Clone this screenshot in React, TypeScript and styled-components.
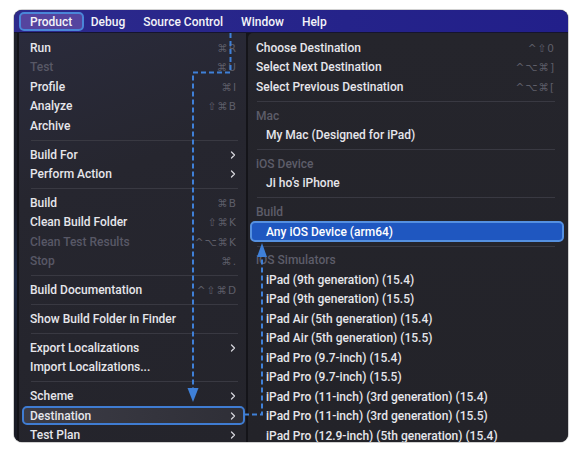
import React from "react";
import styled, { createGlobalStyle, css } from "styled-components";
import { ChevronRight } from "lucide-react";

const GlobalStyle = createGlobalStyle`
  html, body { margin: 0; padding: 0; background: #ffffff; }
  body { font-family: Roboto, "Liberation Sans", "DejaVu Sans", sans-serif; -webkit-font-smoothing: antialiased; }
`;

const Page = styled.div`
  position: relative;
  width: 586px;
  height: 460px;
  padding: 10px 0 0 14px;
  box-sizing: border-box;
  overflow: hidden;
`;

const Frame = styled.div`
  width: 554px;
  height: 432px;
  border-radius: 8px;
  overflow: hidden;
  background: #141419;
  display: flex;
  flex-direction: column;
  box-shadow: 0 0 0 1px rgba(0, 0, 0, 0.18);
`;

const MenuBar = styled.div`
  height: 23px;
  flex: none;
  box-sizing: border-box;
  display: flex;
  align-items: stretch;
  padding: 2px 0 1px 6.5px;
  background: linear-gradient(90deg, #2d2a8c 0%, #25238a 60%, #221f8a 100%);
  border-bottom: 1px solid #15142e;
  font-size: 12px;
  font-weight: 500;
  color: #f3f3f8;
`;

const MenuTitle = styled.div<{ $active?: boolean }>`
  position: relative;
  display: flex;
  align-items: center;
  padding: 0 9px;
  & > span { position: relative; z-index: 1; }
  ${(p) =>
    p.$active &&
    css`
      padding: 0 9.5px;
      &::before {
        content: "";
        position: absolute;
        top: 0;
        bottom: 0;
        left: -1.5px;
        right: -2.5px;
        border: 2px solid #4a86d8;
        border-radius: 5px;
        background: #55449f;
      }
    `}
`;

const Body = styled.div`
  flex: 1;
  min-height: 0;
  display: flex;
  gap: 2px;
`;

const BackStrip = styled.div`
  width: 3px;
  flex: none;
  background: linear-gradient(180deg, #20222c 0%, #1a1c26 40%, #1f2a44 60%, #1a1c26 80%);
`;

const Panel = styled.div<{ $side: "left" | "right" }>`
  box-sizing: border-box;
  padding-top: 5px;
  overflow: hidden;
  ${(p) =>
    p.$side === "left"
      ? css`
          width: 227px;
          flex: none;
          background: linear-gradient(160deg, #2a2b3c 0%, #26262f 35%, #24242b 100%);
        `
      : css`
          flex: 1;
          border-top-left-radius: 5px;
          background: linear-gradient(180deg, #25252c 0%, #232329 100%);
        `}
`;

const Row = styled.div<{
  $side: "left" | "right";
  $tone?: "gray" | "blue";
  $disabled?: boolean;
  $indent?: boolean;
  $header?: boolean;
}>`
  height: 19.5px;
  box-sizing: border-box;
  display: flex;
  align-items: center;
  border: 2px solid transparent;
  border-radius: 5px;
  font-size: 12px;
  font-weight: 500;
  color: #e6e6eb;
  white-space: nowrap;
  ${(p) =>
    p.$side === "left"
      ? css`
          margin: 0 1px 0 3px;
          padding: 0 6px 0 6px;
        `
      : css`
          margin: 0 4px 0 2px;
          padding: 0 7px 0 ${p.$indent ? 14 : 4}px;
        `}
  ${(p) =>
    p.$disabled &&
    css`
      color: #585866;
    `}
  ${(p) =>
    p.$header &&
    css`
      color: #5d5d69;
    `}
  ${(p) =>
    p.$tone === "gray" &&
    css`
      border-color: #3f7cd2;
      background: linear-gradient(90deg, #3c3c46 0%, #34343d 60%, #2f2f37 100%);
    `}
  ${(p) =>
    p.$tone === "blue" &&
    css`
      height: 21px;
      margin-top: -0.75px;
      margin-bottom: -0.75px;
      border-color: #5590e0;
      background: #1f57c0;
      color: #ffffff;
    `}
`;

const Label = styled.span`
  flex: 1;
`;

const Shortcut = styled.span`
  font-family: "DejaVu Sans", Roboto, sans-serif;
  font-size: 10.5px;
  letter-spacing: 1px;
  color: #5e5e69;
`;

const Chevron = styled(ChevronRight)`
  color: #d4d4da;
  margin-right: -2px;
`;

const Separator = styled.div<{ $side: "left" | "right" }>`
  height: 9.3px;
  display: flex;
  align-items: center;
  padding: ${(p) => (p.$side === "left" ? "0 8px 0 12px" : "0 13px 0 9px")};
  &::after {
    content: "";
    flex: 1;
    height: 1px;
    background: #393942;
  }
`;

const Overlay = styled.svg`
  position: absolute;
  left: 0;
  top: 0;
  pointer-events: none;
`;

type Item =
  | { sep: true }
  | {
      sep?: false;
      label: string;
      shortcut?: string;
      sub?: boolean;
      disabled?: boolean;
      tone?: "gray" | "blue";
      indent?: boolean;
      header?: boolean;
    };

const leftItems: Item[] = [
  { label: "Run", shortcut: "⌘R" },
  { label: "Test", shortcut: "⌘U", disabled: true },
  { label: "Profile", shortcut: "⌘I" },
  { label: "Analyze", shortcut: "⇧⌘B" },
  { label: "Archive" },
  { sep: true },
  { label: "Build For", sub: true },
  { label: "Perform Action", sub: true },
  { sep: true },
  { label: "Build", shortcut: "⌘B" },
  { label: "Clean Build Folder", shortcut: "⇧⌘K" },
  { label: "Clean Test Results", shortcut: "^⌥⌘K", disabled: true },
  { label: "Stop", shortcut: "⌘.", disabled: true },
  { sep: true },
  { label: "Build Documentation", shortcut: "^⇧⌘D" },
  { sep: true },
  { label: "Show Build Folder in Finder" },
  { sep: true },
  { label: "Export Localizations", sub: true },
  { label: "Import Localizations..." },
  { sep: true },
  { label: "Scheme", sub: true },
  { label: "Destination", sub: true, tone: "gray" },
  { label: "Test Plan", sub: true },
];

const rightItems: Item[] = [
  { label: "Choose Destination", shortcut: "^⇧0" },
  { label: "Select Next Destination", shortcut: "^⌥⌘]" },
  { label: "Select Previous Destination", shortcut: "^⌥⌘[" },
  { sep: true },
  { label: "Mac", header: true },
  { label: "My Mac (Designed for iPad)", indent: true },
  { sep: true },
  { label: "iOS Device", header: true },
  { label: "Ji ho’s iPhone", indent: true },
  { sep: true },
  { label: "Build", header: true },
  { label: "Any iOS Device (arm64)", indent: true, tone: "blue" },
  { sep: true },
  { label: "iOS Simulators", header: true },
  { label: "iPad (9th generation) (15.4)", indent: true },
  { label: "iPad (9th generation) (15.5)", indent: true },
  { label: "iPad Air (5th generation) (15.4)", indent: true },
  { label: "iPad Air (5th generation) (15.5)", indent: true },
  { label: "iPad Pro (9.7-inch) (15.4)", indent: true },
  { label: "iPad Pro (9.7-inch) (15.5)", indent: true },
  { label: "iPad Pro (11-inch) (3rd generation) (15.4)", indent: true },
  { label: "iPad Pro (11-inch) (3rd generation) (15.5)", indent: true },
  { label: "iPad Pro (12.9-inch) (5th generation) (15.4)", indent: true },
];

function MenuList({ items, side }: { items: Item[]; side: "left" | "right" }) {
  return (
    <Panel $side={side}>
      {items.map((it, i) =>
        it.sep ? (
          <Separator key={i} $side={side} />
        ) : (
          <Row
            key={i}
            $side={side}
            $tone={it.tone}
            $disabled={it.disabled}
            $indent={it.indent}
            $header={it.header}
          >
            <Label>{it.label}</Label>
            {it.shortcut && <Shortcut>{it.shortcut}</Shortcut>}
            {it.sub && <Chevron size={12} strokeWidth={2.6} />}
          </Row>
        )
      )}
    </Panel>
  );
}

export default function App() {
  const blue = "#3f80d8";
  return (
    <Page>
      <GlobalStyle />
      <Frame>
        <MenuBar>
          <MenuTitle $active>
            <span>Product</span>
          </MenuTitle>
          <MenuTitle>
            <span>Debug</span>
          </MenuTitle>
          <MenuTitle>
            <span>Source Control</span>
          </MenuTitle>
          <MenuTitle>
            <span>Window</span>
          </MenuTitle>
          <MenuTitle>
            <span>Help</span>
          </MenuTitle>
        </MenuBar>
        <Body>
          <BackStrip />
          <MenuList items={leftItems} side="left" />
          <MenuList items={rightItems} side="right" />
        </Body>
      </Frame>
      <Overlay width={586} height={460} viewBox="0 0 586 460">
        <path
          d="M230.5 33 V72.5 H193 V389"
          fill="none"
          stroke={blue}
          strokeWidth={2}
          strokeDasharray="5 3"
        />
        <polygon points="187.5,388 198.5,388 193,402" fill={blue} />
        <path
          d="M244 414.5 H262 V256"
          fill="none"
          stroke={blue}
          strokeWidth={2}
          strokeDasharray="5 3"
        />
        <polygon points="257,257 267,257 262,243" fill={blue} />
      </Overlay>
    </Page>
  );
}
